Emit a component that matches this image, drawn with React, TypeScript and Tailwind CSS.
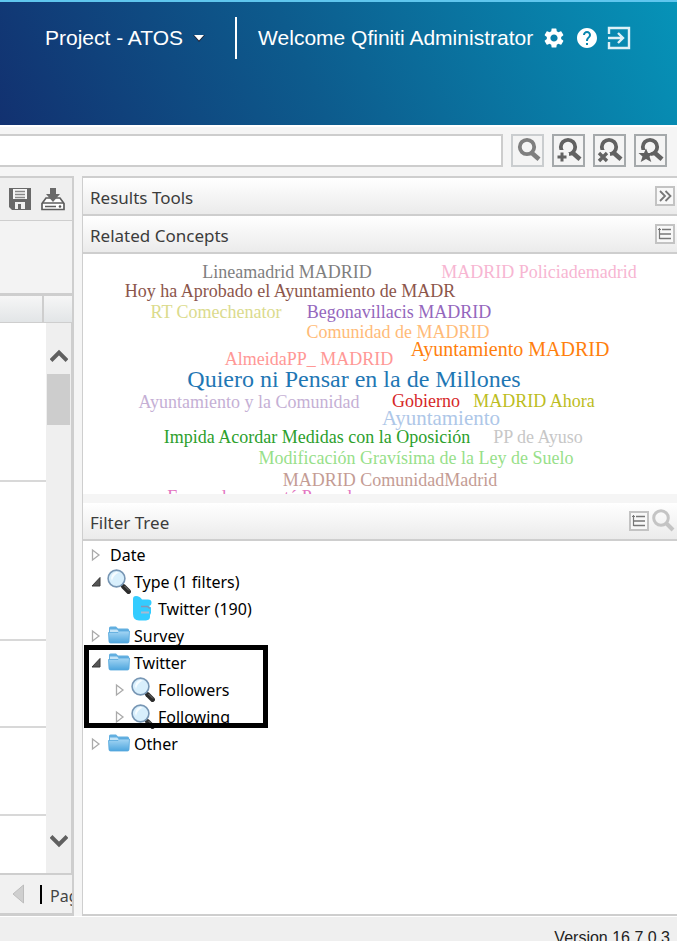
import type { ReactNode } from "react";
import { MdHelp, MdSettings } from "react-icons/md";

type Word = { text: string; x: number; y: number; size: number; fill: string };

const words: Word[] = [
  { text: "Lineamadrid MADRID", x: 204, y: 24, size: 18, fill: "#7f7f7f" },
  { text: "MADRID Policiademadrid", x: 456, y: 24, size: 18, fill: "#f7b6d2" },
  { text: "Hoy ha Aprobado el Ayuntamiento de MADR", x: 207, y: 43, size: 18, fill: "#8c564b" },
  { text: "RT Comechenator", x: 133, y: 64, size: 18, fill: "#dbdb8d" },
  { text: "Begonavillacis MADRID", x: 316, y: 64, size: 18, fill: "#9467bd" },
  { text: "Comunidad de MADRID", x: 315, y: 84, size: 18, fill: "#ffbb78" },
  { text: "Ayuntamiento MADRID", x: 427, y: 102, size: 20, fill: "#ff7f0e" },
  { text: "AlmeidaPP_ MADRID", x: 226, y: 111, size: 18, fill: "#ff9896" },
  { text: "Quiero ni Pensar en la de Millones", x: 271, y: 133, size: 24, fill: "#1f77b4" },
  { text: "Ayuntamiento y la Comunidad", x: 166, y: 154, size: 18, fill: "#c5b0d5" },
  { text: "Gobierno", x: 343, y: 153, size: 18, fill: "#d62728" },
  { text: "MADRID Ahora", x: 451, y: 153, size: 18, fill: "#bcbd22" },
  { text: "Ayuntamiento", x: 358, y: 171, size: 21, fill: "#aec7e8" },
  { text: "Impida Acordar Medidas con la Oposición", x: 234, y: 189, size: 18, fill: "#2ca02c" },
  { text: "PP de Ayuso", x: 455, y: 189, size: 18, fill: "#c7c7c7" },
  { text: "Modificación Gravísima de la Ley de Suelo", x: 333, y: 210, size: 18, fill: "#98df8a" },
  { text: "MADRID ComunidadMadrid", x: 307, y: 232, size: 18, fill: "#c49c94" },
  { text: "Fernandez no está Parando", x: 181, y: 249, size: 18, fill: "#e377c2" },
];

function Lens({ kind }: { kind?: "plus" | "cross" | "star" }) {
  return (
    <svg viewBox="0 0 28 28" className="size-7" aria-hidden="true">
      <circle cx="13" cy="10" r="7.200" fill="none" stroke="#626262" strokeWidth="3.800" />
      <path d="M18.500 13.500 L26.500 20.500 L23.500 24 L15.500 17Z" fill="#626262" />
      {kind && <path d="M0 13h11l3 3v10H0Z" fill="#f4f4f4" />}
      {kind === "plus" && <path d="M7 15.500v9M2.500 20h9" stroke="#626262" strokeWidth="3" />}
      {kind === "cross" && <path d="M3 16l8 8M11 16l-8 8" stroke="#626262" strokeWidth="3.400" />}
      {kind === "star" && (
        <path d="M9 11.500l2 4.500h5.500l-4 3.500 1.800 5.500L9 22l-5.300 3 1.800-5.500-4-3.500H7Z" fill="#606060" />
      )}
    </svg>
  );
}

function SearchButton({ label, kind, faded }: { label: string; kind?: "plus" | "cross" | "star"; faded?: boolean }) {
  return (
    <button
      type="button"
      aria-label={label}
      className={`flex size-[33px] items-center justify-center border-2 bg-[#f4f4f4] ${faded ? "border-[#c0c4c6] opacity-80" : "border-[#a5a9ab]"}`}
    >
      <Lens kind={kind} />
    </button>
  );
}

function ListButton() {
  return (
    <button type="button" aria-label="List view" className="size-5 border-2 border-[#c3c3c3] bg-[#f8f8f8]">
      <svg viewBox="0 0 16 16" className="size-4" fill="none" stroke="#777" aria-hidden="true">
        <path d="M2.500 2v11M1 3.500h3" strokeWidth="1.200" />
        <path d="M5 3.500h9M2.500 8h11.500M2.500 12.500h11.500" strokeWidth="1.400" />
      </svg>
    </button>
  );
}

function PanelHeader({ title, children }: { title: string; children: ReactNode }) {
  return (
    <div className="flex h-[38px] shrink-0 items-center justify-between border-b-2 border-[#cecece] bg-linear-to-b from-white to-[#ebebeb] pr-[2px] pl-[7px]">
      <h2 className="pt-[3px] text-[17px] text-[#3c3c3c]">{title}</h2>
      <div className="flex items-center gap-[2px]">{children}</div>
    </div>
  );
}

function Toggle({ open }: { open?: boolean }) {
  return (
    <svg viewBox="0 0 12 14" className="h-[14px] w-3 shrink-0" aria-hidden="true">
      {open ? (
        <path d="M10 2.500v8.500H2Z" fill="#555" stroke="#3a3a3a" strokeLinejoin="round" />
      ) : (
        <path d="M2.500 2v10l6.500-5Z" fill="#fff" stroke="#aaa" strokeWidth="1.300" />
      )}
    </svg>
  );
}

function FolderIcon() {
  return (
    <svg viewBox="0 0 24 24" className="size-6 shrink-0" aria-hidden="true">
      <defs>
        <linearGradient id="folder" x1="0" y1="0" x2="0" y2="1">
          <stop offset="0" stopColor="#a5d6f4" />
          <stop offset="1" stopColor="#4ea6de" />
        </linearGradient>
      </defs>
      <path d="M2 4Q2 2.500 3.500 2.500H9l2 2h9.500Q22 4.500 22 6V18H2Z" fill="#62afe0" />
      <path d="M3 5.500h7l1.500 1.500H21V9H3Z" fill="#c4e4f7" />
      <path d="M1.500 8.500H11L12.500 7h10L22 17.500Q22 19 20.500 19h-17Q2 19 2 17.500Z" fill="url(#folder)" stroke="#56a7dc" strokeWidth=".8" />
    </svg>
  );
}

function GlassIcon() {
  return (
    <svg viewBox="0 0 24 26" className="h-[26px] w-6 shrink-0" aria-hidden="true">
      <path d="M14 15.500l3 3" stroke="#999" strokeWidth="2.500" />
      <path d="M16.500 17.500l5 5" stroke="#2c2c2c" strokeWidth="4.800" strokeLinecap="round" />
      <path d="M17.500 17l4.500 4.500" stroke="#777" strokeWidth="1" />
      <circle cx="9.500" cy="9.500" r="8.400" fill="#d8effc" stroke="#7796b4" strokeWidth="1.600" />
      <path d="M4 9a6 6 0 0 1 8-5.500Q6 6 5 12Z" fill="#f6fcff" />
    </svg>
  );
}

function BirdIcon() {
  return (
    <svg viewBox="0 0 24 26" className="h-[26px] w-6 shrink-0" aria-hidden="true">
      <path d="M2 3Q2 0 5 0q4 0 6 3.500h6q3.500 0 3.500 3T18 10l2 1.500V17l-1 2v2q0 3-4 3.500H8Q2 24 2 18Z" fill="#33ccff" />
      <path d="M10 10.500h6.500l2.500 2" fill="none" stroke="#8795b5" strokeWidth="1.500" />
      <path d="M10 15.500h8v2h-8Z" fill="#a8b9d0" />
    </svg>
  );
}

function Node({ label, icon, open, leaf, depth = 0 }: { label: string; icon?: ReactNode; open?: boolean; leaf?: boolean; depth?: 0 | 1 }) {
  return (
    <button type="button" className={`flex h-[27px] w-full items-center ${depth ? "pl-[31px]" : "pl-[7px]"}`}>
      {leaf ? <span className="w-3" /> : <Toggle open={open} />}
      <span className="ml-[5px] flex items-center gap-[3px]">
        {icon}
        <span className={icon ? "" : "ml-[3px]"}>{label}</span>
      </span>
    </button>
  );
}

function ScrollArrow({ down }: { down?: boolean }) {
  return (
    <svg viewBox="0 0 18 14" className="h-[14px] w-[18px]" fill="none" stroke="#606060" strokeWidth="4" aria-hidden="true">
      <path d={down ? "M1 2.500l8 8 8-8" : "M1 11.500l8-8 8 8"} />
    </svg>
  );
}

function ResultsGrid() {
  return (
    <section className="flex w-[74px] shrink-0 flex-col border-t-2 border-r-2 border-b-[3px] border-[#cecece]">
      <div className="flex h-[43px] shrink-0 items-center gap-[9px] border-b border-[#cecece] bg-[#efefef] pl-[8px]">
        <button type="button" aria-label="Save">
          <svg viewBox="0 0 24 24" className="size-6" aria-hidden="true">
            <path d="M1 1h22v22H4l-3-3Z" fill="#696969" />
            <path d="M5 2h14v10H5Z" fill="#f6f6f6" />
            <path d="M7 4.500h10M7 7.500h10M7 10.500h10" stroke="#888" strokeWidth="1.300" />
            <path d="M7 15h10v7H7Z" fill="#f1f1f1" />
            <path d="M10 17h3v5h-3Z" fill="#696969" />
          </svg>
        </button>
        <button type="button" aria-label="Export">
          <svg viewBox="0 0 24 24" className="size-6" aria-hidden="true">
            <path d="M5 11h14l4 5.500v6H1v-6Z" fill="#fff" stroke="#5e5e5e" strokeWidth="1.700" />
            <path d="M1 16h22M4 19.500h11" stroke="#5e5e5e" strokeWidth="1.700" />
            <path d="M9 1h6v6h4l-7 8-7-8h4Z" fill="#6a6a6a" />
            <circle cx="19" cy="19.500" r="1.300" fill="#555" />
          </svg>
        </button>
      </div>
      <div className="h-[72px] shrink-0 bg-[#f3f3f3]" />
      <div className="flex h-[30px] shrink-0 border-t-[3px] border-b border-[#cecece] bg-linear-to-b from-[#f6f6f6] to-[#e2e5e7]">
        <div className="w-[44px] border-r-2 border-[#cecece]" />
      </div>
      <div className="flex min-h-0 flex-1 bg-white">
        <div className="flex w-[46px] flex-col">
          <div className="h-[159px] border-b-2 border-[#d8d8d8]" />
          <div className="h-[159px] border-b-2 border-[#d8d8d8]" />
          <div className="h-[87px] border-b-2 border-[#d8d8d8]" />
          <div className="h-[88px] border-b-2 border-[#d8d8d8]" />
        </div>
        <div className="flex flex-1 flex-col items-center border-r border-[#cecece] bg-[#efefef] pt-[26px] pb-[25px]">
          <ScrollArrow />
          <div className="mt-[11px] h-[51px] w-[23px] bg-[#cdcdcd]" />
          <div className="flex-1" />
          <ScrollArrow down />
        </div>
      </div>
      <div className="flex h-[40px] shrink-0 items-center overflow-hidden border-t-2 border-[#cecece] bg-[#f1f1f1] pl-[12px]">
        <button type="button" aria-label="Previous page">
          <svg viewBox="0 0 12 20" className="h-5 w-3" aria-hidden="true">
            <path d="M11.500 1v18L1 10Z" fill="#cfcfcf" stroke="#bdbdbd" />
          </svg>
        </button>
        <span className="ml-4 h-[19px] w-[2px] shrink-0 bg-black" />
        <span className="ml-2 pt-1 text-base text-[#444]">Page</span>
      </div>
    </section>
  );
}

export default function App() {
  return (
    <div className="flex h-screen flex-col overflow-hidden bg-[#f5f5f5] font-['Noto_Sans',sans-serif]">
      <header className="flex h-[127px] shrink-0 items-start border-t-2 border-b-2 border-t-[#5fc6ee] border-b-white bg-[linear-gradient(65deg,#123170_0%,#0d5b8d_45%,#0693b8_100%)] pt-[15px] pl-[45px] font-['Liberation_Sans',Arial,sans-serif] text-[21px] text-white">
        <button type="button" className="flex h-[42px] items-center gap-[10px]">
          Project - ATOS
          <svg viewBox="0 0 12 8" className="h-2 w-3" aria-hidden="true">
            <path d="M0 1h12L6 8Z" fill="#223" />
            <path d="M1 1h10L6 6.500Z" fill="#fff" />
          </svg>
        </button>
        <div className="ml-[30px] flex h-[42px] items-center border-l-2 border-white pl-[21px]">
          <span>Welcome Qfiniti Administrator</span>
          <button type="button" aria-label="Settings" className="ml-[9px]">
            <MdSettings className="size-6" />
          </button>
          <button type="button" aria-label="Help" className="ml-[9px]">
            <MdHelp className="size-6" />
          </button>
          <button type="button" aria-label="Log out" className="ml-[8px]">
            <svg viewBox="0 0 24 24" className="size-6" fill="none" stroke="#dff1f7" strokeWidth="2.400" aria-hidden="true">
              <path d="M2 8V2h20v20H2v-6" />
              <path d="M1 12h14M11 7l5 5-5 5" />
            </svg>
          </button>
        </div>
      </header>

      <div className="flex h-[49px] shrink-0 items-start gap-2 pt-[7px] pr-[10px]">
        <input aria-label="Search" className="h-[33px] min-w-0 flex-1 border-2 border-l-0 border-[#cdcdcd] bg-white px-2 outline-none" />
        <SearchButton label="Search" faded />
        <SearchButton label="Add to search" kind="plus" />
        <SearchButton label="Clear search" kind="cross" />
        <SearchButton label="Save search" kind="star" />
      </div>

      <main className="flex min-h-0 flex-1">
        <ResultsGrid />
        <div className="ml-2 flex min-w-0 flex-1 flex-col border-t-2 border-b-2 border-l border-[#cecece]">
          <PanelHeader title="Results Tools">
            <button type="button" aria-label="Collapse" className="size-5 border-2 border-[#c3c3c3] bg-[#f8f8f8]">
              <svg viewBox="0 0 16 16" className="size-4" fill="none" stroke="#777" strokeWidth="1.800" aria-hidden="true">
                <path d="M3 3l5 5-5 5M8.500 3l5 5-5 5" />
              </svg>
            </button>
          </PanelHeader>
          <PanelHeader title="Related Concepts">
            <ListButton />
          </PanelHeader>
          <div className="h-[240px] shrink-0 overflow-hidden bg-white">
            <svg width="594" height="240" textAnchor="middle" className="font-['Liberation_Serif',serif]">
              {words.map((w) => (
                <text key={w.text} x={w.x} y={w.y} fontSize={w.size} fill={w.fill}>
                  {w.text}
                </text>
              ))}
            </svg>
          </div>
          <div className="h-[9px] shrink-0 bg-[#f5f5f5]" />
          <PanelHeader title="Filter Tree">
            <ListButton />
            <button type="button" aria-label="Search filters">
              <svg viewBox="0 0 24 24" className="size-6" fill="none" stroke="#c4c4c4" aria-hidden="true">
                <circle cx="10" cy="9" r="7.300" strokeWidth="3" />
                <path d="M15.500 14.500l6.500 6.500" strokeWidth="4" />
              </svg>
            </button>
          </PanelHeader>
          <div className="min-h-0 flex-1 bg-white text-base text-black">
            <Node label="Date" />
            <Node label="Type (1 filters)" icon={<GlassIcon />} open />
            <Node label="Twitter (190)" icon={<BirdIcon />} leaf depth={1} />
            <Node label="Survey" icon={<FolderIcon />} />
            <div className="relative">
              <Node label="Twitter" icon={<FolderIcon />} open />
              <Node label="Followers" icon={<GlassIcon />} depth={1} />
              <Node label="Following" icon={<GlassIcon />} depth={1} />
              <div className="pointer-events-none absolute -top-1 left-px h-[83px] w-[184px] border-5 border-black" />
            </div>
            <Node label="Other" icon={<FolderIcon />} />
          </div>
        </div>
      </main>

      <footer className="flex h-[25px] shrink-0 justify-end overflow-hidden border-t border-white bg-[#efefef] pt-[9px] pr-[7px] font-['Liberation_Sans',Arial,sans-serif] text-base text-[#222]">
        Version 16.7.0.3
      </footer>
    </div>
  );
}
